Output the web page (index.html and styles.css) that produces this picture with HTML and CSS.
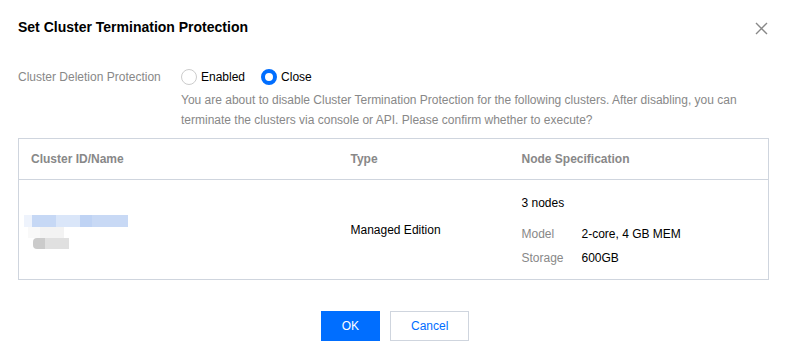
FILE: index.html
```html
<!DOCTYPE html>
<html lang="en">
<head>
    <meta charset="UTF-8">
    <meta name="viewport" content="width=device-width, initial-scale=1.0">
    <title>Set Cluster Termination Protection</title>
    <link rel="stylesheet" href="styles.css">
</head>
<body>
    <div class="dialog">
        <div class="dialog-header">
            <h2>Set Cluster Termination Protection</h2>
            <span class="close-btn">
                <svg width="13" height="13" viewBox="0 0 13 13"><path d="M1 1 L12 12 M12 1 L1 12" stroke="#888" stroke-width="1.4" fill="none"/></svg>
            </span>
        </div>

        <div class="form-row">
            <label class="form-label">Cluster Deletion Protection</label>
            <div class="form-control">
                <div class="radios">
                    <label class="radio"><span class="radio-dot"></span>Enabled</label>
                    <label class="radio checked"><span class="radio-dot"></span>Close</label>
                </div>
                <p class="hint">You are about to disable Cluster Termination Protection for the following clusters. After disabling, you can terminate the clusters via console or API. Please confirm whether to execute?</p>
            </div>
        </div>

        <table class="cluster-table">
            <thead>
                <tr>
                    <th class="col-id">Cluster ID/Name</th>
                    <th class="col-type">Type</th>
                    <th>Node Specification</th>
                </tr>
            </thead>
            <tbody>
                <tr>
                    <td class="col-id">
                        <div class="masked">
                            <div class="mask-line blue"><i></i><i></i><i></i><i></i><i></i></div>
                            <div class="mask-line light"><i></i><i></i><i></i></div>
                            <div class="mask-line grey"><i></i><i></i><i></i></div>
                        </div>
                    </td>
                    <td>Managed Edition</td>
                    <td>
                        <div class="spec-list">
                            <div class="nodes">3 nodes</div>
                            <div class="spec"><span class="spec-key">Model</span>2-core, 4 GB MEM</div>
                            <div class="spec"><span class="spec-key">Storage</span>600GB</div>
                        </div>
                    </td>
                </tr>
            </tbody>
        </table>

        <div class="dialog-footer">
            <button class="btn btn-primary">OK</button>
            <button class="btn">Cancel</button>
        </div>
    </div>
</body>
</html>
```

FILE: styles.css
```css
body {
    margin: 0;
    background-color: #fff;
    font-family: 'Liberation Sans', Arial, sans-serif;
    font-size: 12px;
    color: #000;
}
.dialog {
    padding: 16px 20px 20px 18px;
}
.dialog-header {
    display: flex;
    justify-content: space-between;
    align-items: center;
    height: 22px;
}
.dialog-header h2 {
    margin: 0;
    font-size: 14px;
    font-weight: bold;
    color: #000;
}
.close-btn {
    display: flex;
    margin-top: 2px;
}
.form-row {
    display: flex;
    margin-top: 28px;
}
.form-label {
    width: 163px;
    color: #888;
    line-height: 22px;
}
.form-control {
    flex: 1;
}
.radios {
    display: flex;
    gap: 16px;
    height: 22px;
    align-items: center;
}
.radio {
    display: flex;
    align-items: center;
    color: #000;
}
.radio-dot {
    box-sizing: border-box;
    width: 16px;
    height: 16px;
    border: 1px solid #ccc;
    border-radius: 50%;
    margin-right: 4px;
}
.radio.checked .radio-dot {
    border: 4px solid #006eff;
}
.hint {
    margin: 3px 0 0;
    color: #888;
    line-height: 19.5px;
    padding-right: 10px;
}
.cluster-table {
    width: 751px;
    margin-top: 8px;
    border-collapse: collapse;
    border: 1px solid #cfd5de;
    table-layout: fixed;
}
.cluster-table th {
    box-sizing: border-box;
    height: 41px;
    padding: 0 12px;
    text-align: left;
    font-weight: bold;
    color: #888;
    border-bottom: 1px solid #cfd5de;
}
.cluster-table td {
    height: 99px;
    padding: 0 12px;
    vertical-align: middle;
    color: #000;
}
.cluster-table .col-id {
    width: 320px;
}
.cluster-table .col-type {
    width: 171px;
}
.spec-list {
    margin-top: 7px;
}
.masked {
    margin-left: -7px;
    margin-top: 4px;
}
.mask-line {
    display: flex;
    height: 12px;
}
.mask-line i {
    display: block;
    width: 12px;
}
.mask-line.blue i { background: #c8d9f5; }
.mask-line.blue i:first-child { background: #eef3fc; width: 8px; }
.mask-line.blue i:nth-child(2) { background: #c6d8f5; width: 24px; }
.mask-line.blue i:nth-child(3) { background: #dae6f9; width: 24px; }
.mask-line.blue i:nth-child(4) { background: #bfd3f4; width: 12px; }
.mask-line.blue i:nth-child(5) { width: 36px; }
.mask-line.light { height: 11px; margin-left: 4px; }
.mask-line.light i { background: #f3f3f3; }
.mask-line.light i:first-child { background: #f9f9f9; }
.mask-line.grey { height: 11px; margin-left: 9px; }
.mask-line.grey i { background: #e0e0e0; }
.mask-line.grey i:first-child { background: #cbcbcb; border-radius: 4px 0 0 4px; }
.nodes {
    margin-bottom: 12px;
}
.spec {
    line-height: 24px;
}
.spec-key {
    display: inline-block;
    width: 60px;
    color: #888;
}
.dialog-footer {
    display: flex;
    justify-content: center;
    gap: 10px;
    margin-top: 31px;
    padding-left: 4px;
}
.btn {
    height: 30px;
    min-width: 77px;
    padding: 0 20px;
    background-color: #fff;
    border: 1px solid #cfd5de;
    color: #006eff;
    font-family: inherit;
    font-size: 12px;
    cursor: pointer;
}
.btn-primary {
    min-width: 58px;
    background-color: #006eff;
    border-color: #006eff;
    color: #fff;
}
```
